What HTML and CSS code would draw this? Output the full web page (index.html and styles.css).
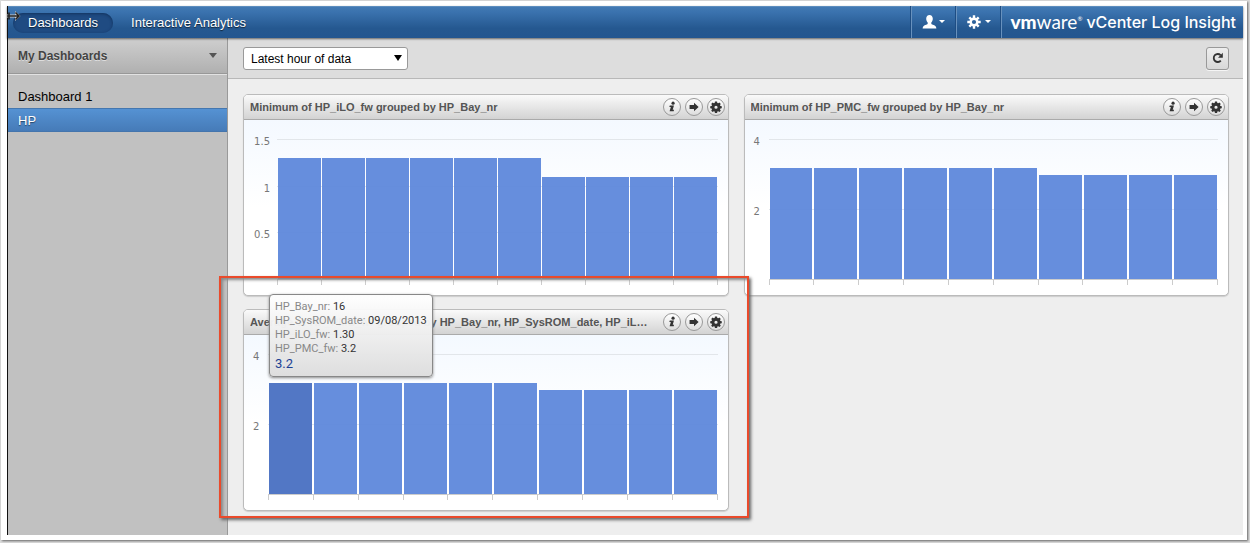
FILE: index.html
```html
<!DOCTYPE html>
<html lang="en">
<head>
<meta charset="utf-8">
<title>vCenter Log Insight</title>
<link rel="stylesheet" href="styles.css">
</head>
<body>
<svg class="sprite" aria-hidden="true">
  <symbol id="info" viewBox="0 0 18 18"><circle cx="10.200" cy="4.700" r="1.800"/><path d="M6.500 7.200h4.700l-1.400 5h1.500l-.4 1.700H6.300l1.400-5H6z"/></symbol>
  <symbol id="arrow" viewBox="0 0 18 18"><path d="M4 6.800h5V4.200L14.200 9 9 13.800v-2.600H4z"/></symbol>
  <symbol id="gear" viewBox="0 0 18 18"><path fill-rule="evenodd" d="M7.800 2.800h2.400l.3 1.600 1 .4 1.300-.9 1.600 1.600-.9 1.300.4 1 1.600.3v2.400l-1.600.3-.4 1 .9 1.300-1.600 1.600-1.300-.9-1 .4-.3 1.600H7.800l-.3-1.600-1-.4-1.300.9-1.600-1.600.9-1.300-.4-1-1.600-.3V8.100l1.600-.3.4-1-.9-1.300 1.600-1.600 1.300.9 1-.4zM9 7.500a1.800 1.800 0 1 0 0 3.600 1.800 1.800 0 0 0 0-3.600z"/></symbol>
</svg>
<div class="app">
  <svg class="pointer" viewBox="0 0 14 12" width="14" height="12" aria-hidden="true"><path d="M0 4.500h8V1l5.500 5L8 11V7.500H0z" fill="#ccc"/><path d="M0 6h12M8.500 2.500L12 6 8.500 9.500M2 2.500v7" fill="none" stroke="#222" stroke-width="1.600"/></svg>
  <header class="topbar">
    <nav class="nav">
      <a class="nav-link active" href="#">Dashboards</a>
      <a class="nav-link" href="#">Interactive Analytics</a>
    </nav>
    <button class="menu" aria-label="User menu">
      <svg viewBox="0 0 24 16" width="24" height="16"><path fill="#fff" d="M7.500 1c2 0 3.300 1.400 3.300 3.700 0 1.500-.6 2.900-1.500 3.700v1c0 .6.6.9 1.600 1.300 2.100.8 3.300 1.300 3.500 3.800H.6c.2-2.500 1.400-3 3.500-3.800 1-.4 1.600-.7 1.600-1.300v-1c-.9-.8-1.500-2.200-1.500-3.700C4.200 2.400 5.500 1 7.500 1zM17 6h6l-3 3z"/></svg>
    </button>
    <button class="menu" aria-label="Settings menu">
      <svg viewBox="0 0 26 16" width="26" height="16"><circle cx="8" cy="8" r="3.300" fill="none" stroke="#fff" stroke-width="2.400"/><path stroke="#fff" stroke-width="2.400" d="M8 1.300v3M8 11.700v3M1.300 8h3M11.700 8h3M3.300 3.300l2 2M10.700 10.700l2 2M12.700 3.300l-2 2M5.300 10.700l-2 2"/><path fill="#fff" d="M19 6h6l-3 3z"/></svg>
    </button>
    <div class="brand"><span class="logo"><b>vm</b>ware<sup>®</sup></span><span class="product">vCenter Log Insight</span></div>
  </header>
  <div class="columns">
    <aside class="sidebar">
      <button class="group">My Dashboards <span class="caret"></span></button>
      <nav class="boards">
        <a class="board" href="#">Dashboard 1</a>
        <a class="board selected" href="#">HP</a>
      </nav>
    </aside>
    <main class="main">
      <div class="toolbar">
        <span class="picker">
          <select class="range" aria-label="Time range"><option>Latest hour of data</option></select>
          <span class="picker-arrow"></span>
        </span>
        <button class="refresh" aria-label="Refresh"><svg viewBox="0 0 12 12" width="12" height="12"><path d="M8.800 8.600A4 4 0 1 1 8.600 3.200" fill="none" stroke="#333" stroke-width="1.800"/><path d="M10.800.8v4.900H6z" fill="#333"/></svg></button>
      </div>
      <div class="widgets">
        <section class="widget">
          <header class="widget-head">
            <h2>Minimum of HP_iLO_fw grouped by HP_Bay_nr</h2>
            <button aria-label="Info"><svg><use href="#info"/></svg></button>
            <button aria-label="Open"><svg><use href="#arrow"/></svg></button>
            <button aria-label="Settings"><svg><use href="#gear"/></svg></button>
          </header>
          <div class="chart wide-axis">
            <div class="labels"><span>1.5</span><span>1</span><span>0.5</span></div>
            <div class="plot">
              <div class="lines"><i></i><i></i><i></i></div>
              <div class="bars tight">
                <i style="height:86.5%"></i><i style="height:86.5%"></i><i style="height:86.5%"></i><i style="height:86.5%"></i><i style="height:86.5%"></i><i style="height:86.5%"></i><i style="height:73%"></i><i style="height:73%"></i><i style="height:73%"></i><i style="height:73%"></i>
              </div>
            </div>
            <div class="ticks"><i></i><i></i><i></i><i></i><i></i><i></i><i></i><i></i><i></i><i></i></div>
          </div>
        </section>
        <section class="widget">
          <header class="widget-head">
            <h2>Minimum of HP_PMC_fw grouped by HP_Bay_nr</h2>
            <button aria-label="Info"><svg><use href="#info"/></svg></button>
            <button aria-label="Open"><svg><use href="#arrow"/></svg></button>
            <button aria-label="Settings"><svg><use href="#gear"/></svg></button>
          </header>
          <div class="chart">
            <div class="labels"><span>4</span><span>2</span></div>
            <div class="plot">
              <div class="lines"><i></i><i></i></div>
              <div class="bars">
                <i style="height:79%"></i><i style="height:79%"></i><i style="height:79%"></i><i style="height:79%"></i><i style="height:79%"></i><i style="height:79%"></i><i style="height:74%"></i><i style="height:74%"></i><i style="height:74%"></i><i style="height:74%"></i>
              </div>
            </div>
            <div class="ticks"><i></i><i></i><i></i><i></i><i></i><i></i><i></i><i></i><i></i><i></i></div>
          </div>
        </section>
        <section class="widget">
          <header class="widget-head">
            <h2>Average of HP_PMC_fw grouped by HP_Bay_nr, HP_SysROM_date, HP_iLO_fw, HP_PMC_fw</h2>
            <button aria-label="Info"><svg><use href="#info"/></svg></button>
            <button aria-label="Open"><svg><use href="#arrow"/></svg></button>
            <button aria-label="Settings"><svg><use href="#gear"/></svg></button>
          </header>
          <div class="chart">
            <div class="labels"><span>4</span><span>2</span></div>
            <div class="plot">
              <div class="lines"><i></i><i></i></div>
              <div class="bars">
                <i class="hover" style="height:79%"></i><i style="height:79%"></i><i style="height:79%"></i><i style="height:79%"></i><i style="height:79%"></i><i style="height:79%"></i><i style="height:74%"></i><i style="height:74%"></i><i style="height:74%"></i><i style="height:74%"></i>
              </div>
            </div>
            <div class="ticks"><i></i><i></i><i></i><i></i><i></i><i></i><i></i><i></i><i></i><i></i></div>
          </div>
          <div class="tooltip">
            <div>HP_Bay_nr: <b>16</b></div>
            <div>HP_SysROM_date: <b>09/08/2013</b></div>
            <div>HP_iLO_fw: <b>1.30</b></div>
            <div>HP_PMC_fw: <b>3.2</b></div>
            <div class="value">3.2</div>
          </div>
          <div class="callout"></div>
        </section>
      </div>
    </main>
  </div>
</div>
</body>
</html>
```
FILE: styles.css
```css
* { box-sizing: border-box; }
html { background: #dcdcdc; }
body {
  display: flex;
  min-height: 100vh;
  margin: 0;
  padding: 1px 3px 3px 1px;
  font: 13px/16px "Liberation Sans", Arial, sans-serif;
  background: #dcdcdc;
}
button { padding: 0; border: 0; background: none; font: inherit; color: inherit; }
a { color: inherit; text-decoration: none; }
.sprite { position: absolute; width: 0; height: 0; }

.app {
  position: relative;
  display: flex;
  flex: 1;
  flex-direction: column;
  min-width: 0;
  border: 5px solid #fff;
  border-left-width: 6px;
  border-right-width: 4px;
  box-shadow: 1px 1px 2px #666;
  background: #eee;
}
.columns, .topbar { border-left: 1px solid #111; }
.pointer { position: absolute; left: 0; top: 4px; z-index: 2; }

.topbar {
  display: flex;
  align-items: stretch;
  height: 32px;
  color: #fff;
  background: linear-gradient(#75a0c8 0, #4279b3 1px, #3a72ae 20%, #255890 70%, #235690);
  box-shadow: 0 1px 2px rgba(0, 0, 0, .55);
  z-index: 1;
}
.nav { display: flex; flex: 1; align-items: center; gap: 4px; padding: 1px 0 0 5px; }
.nav-link { padding: 2px 15px 2px 14px; border-radius: 10px; text-shadow: 0 1px 1px #123; }
.nav-link.active { padding-left: 15px; background: #1f4b82; box-shadow: inset 0 1px 3px #12335e; }
.menu { display: flex; align-items: center; justify-content: center; width: 45px; border-left: 1px solid #6891bd; box-shadow: -1px 0 #1e4d83; }
.brand { display: flex; align-items: center; gap: 4px; padding: 0 7px 0 8px; border-left: 1px solid #6891bd; box-shadow: -1px 0 #1e4d83; white-space: nowrap; }
.logo { font: 19px/24px Lato, sans-serif; }
.logo b { font-weight: 900; }
.logo sup { font-size: 6px; line-height: 6px; vertical-align: 8px; }
.product { font: 500 16px/24px Inter, sans-serif; }

.columns { display: flex; flex: 1; }
.sidebar { flex: none; width: 220px; border-right: 1px solid #999; background: #c1c1c1; }
.group {
  display: flex;
  align-items: center;
  justify-content: space-between;
  width: 100%;
  height: 36px;
  padding: 0 10px;
  border-bottom: 1px solid #989898;
  box-shadow: 0 1px #e2e2e2;
  background: linear-gradient(#cfcfcf, #b0b0b0);
  font-size: 12px;
  font-weight: bold;
  color: #444;
  text-shadow: 0 1px #ddd;
}
.caret { border: 4px solid transparent; border-top: 5px solid #555; border-bottom: 0; }
.boards { padding-top: 10px; }
.board { display: block; height: 24px; padding: 5px 10px 3px; color: #000; }
.board.selected { border-top: 1px solid #4477b0; border-bottom: 1px solid #4475ad; padding-top: 4px; color: #fff; background: linear-gradient(#5592d3, #467bb8); text-shadow: 0 1px 1px #246; }

.main { flex: 1; min-width: 0; }
.toolbar { display: flex; align-items: center; justify-content: space-between; height: 41px; padding: 0 14px 0 15px; border-bottom: 1px solid #b8b8b8; background: #ddd; }
.picker { position: relative; display: flex; }
.range { appearance: none; width: 165px; height: 23px; padding: 2px 7px 0; border: 1px solid #999; border-radius: 3px; background: #fff; color: #000; font: 12px/16px "Liberation Sans", Arial, sans-serif; }
.picker-arrow { position: absolute; right: 6px; top: 8px; border: 4px solid transparent; border-top: 6px solid #000; border-bottom: 0; pointer-events: none; }
.refresh { display: flex; align-items: center; justify-content: center; width: 23px; height: 23px; border: 1px solid #999; border-radius: 3px; background: linear-gradient(#eee, #d8d8d8); box-shadow: 0 1px #f5f5f5; }

.widgets { display: grid; grid-template-columns: 1fr 1fr; gap: 13px 15px; padding: 15px 14px 15px 15px; }
.widget { position: relative; min-width: 0; border: 1px solid #bbb; border-radius: 5px; background: #fff; box-shadow: 0 1px 1px #ccc; }
.widget-head {
  display: flex;
  align-items: center;
  gap: 4px;
  height: 25px;
  padding: 0 3px 0 6px;
  border-bottom: 1px solid #aaa;
  border-radius: 4px 4px 0 0;
  background: linear-gradient(#fafafa, #d3d3d3);
}
.widget-head h2 { flex: 1; min-width: 0; margin: 0 5px 0 0; overflow: hidden; font-size: 11px; line-height: 14px; color: #555; white-space: nowrap; text-overflow: ellipsis; }
.widget-head button { width: 18px; height: 18px; border: 1px solid #999; border-radius: 50%; background: linear-gradient(#fff, #ddd); color: #333; }
.widget-head svg { display: block; width: 16px; height: 16px; fill: #333; }

.chart { display: grid; grid-template-columns: 15px 1fr; grid-template-rows: 140px 6px; padding: 19px 10px 10px 9px; border-radius: 0 0 5px 5px; background: linear-gradient(#f4f9ff, #fff 50%); }
.chart.wide-axis { grid-template-columns: 24px 1fr; }
.labels { display: grid; grid-auto-rows: 1fr; margin: -4px 0 4px; font: 10px/14px "DejaVu Sans", sans-serif; color: #777; }
.wide-axis .labels { width: 17px; text-align: right; }
.plot { display: grid; }
.lines, .bars { grid-area: 1 / 1; }
.lines { display: grid; grid-auto-rows: 1fr; }
.lines i { border-top: 1px solid #e2e6ea; }
.bars { display: flex; align-items: flex-end; gap: 2px; padding: 0 1px; }
.bars.tight { gap: 1px; }
.bars i { flex: 1; background: rgba(94, 136, 219, .95); }
.bars .hover { background: #5277c5; }
.ticks { grid-column: 2; display: flex; border: 1px solid #ccc; border-bottom: 0; }
.ticks i { flex: 1; }
.ticks i + i { border-left: 1px solid #ccc; }

.tooltip { position: absolute; left: 25px; top: -16px; z-index: 3; min-width: 160px; padding: 5px; border: 1px solid #888; border-radius: 4px; background: linear-gradient(rgba(255, 255, 255, .97), rgba(221, 221, 221, .97)); box-shadow: 0 1px 3px #888; font-family: Roboto, sans-serif; font-size: 11px; line-height: 14px; color: #888; white-space: nowrap; }
.tooltip b { font-weight: normal; color: #333; }
.tooltip .value { font-size: 13px; line-height: 15px; color: #1c3f94; }
.callout { position: absolute; inset: -34px -21px -8px -25px; z-index: 2; border: 2px solid #ea4a2b; box-shadow: 2px 2px 3px #666, inset 2px 2px 3px #888; pointer-events: none; }
```
